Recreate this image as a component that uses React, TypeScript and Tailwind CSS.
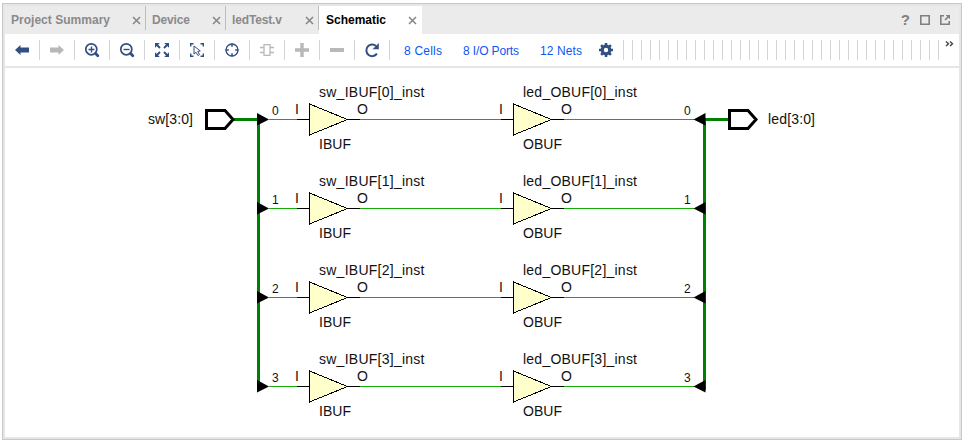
import React from "react";

const TABS = [
  { label: "Project Summary", width: "w-[141px]", pad: "pl-[6px]", text: 99, active: false },
  { label: "Device", width: "w-[80px]", pad: "pl-[6px]", text: 38, active: false },
  { label: "ledTest.v", width: "w-[93px]", pad: "pl-[6px]", text: 50, active: false },
  { label: "Schematic", width: "w-[103px]", pad: "pl-[7px]", text: 60, active: true },
];

function Fitted({ text, width, size, bold, fill }: { text: string; width: number; size: number; bold?: boolean; fill: string }) {
  return (
    <svg width={width} height="16" className="block shrink-0 overflow-visible">
      <text x="0" y="12" fontSize={size} fontWeight={bold ? 700 : 400} fill={fill} textLength={width}>
        {text}
      </text>
    </svg>
  );
}

function Icon({ children }: { children: React.ReactNode }) {
  return (
    <svg width="16" height="16" viewBox="0 0 16 16" fill="none" stroke="#314f82" strokeWidth="2" className="block shrink-0">
      {children}
    </svg>
  );
}

const ICONS: React.ReactNode[] = [
  <path d="M1 8 6.5 3v2.5H15v5H6.5V13z" fill="#314f82" stroke="none" />,
  <path d="M15 8 9.5 3v2.5H1v5h8.5V13z" fill="#b8b8b8" stroke="none" />,
  <>
    <circle cx="7.3" cy="7.3" r="5.5" strokeWidth="1.7" />
    <path d="m11.6 11.6 2.2 2.2" strokeWidth="2.8" strokeLinecap="round" />
    <path d="M4.5 7.5h6M7.5 4.5v6" strokeWidth="1.4" />
  </>,
  <>
    <circle cx="7.3" cy="7.3" r="5.5" strokeWidth="1.7" />
    <path d="m11.6 11.6 2.2 2.2" strokeWidth="2.8" strokeLinecap="round" />
    <path d="M4.5 7.5h6" strokeWidth="1.4" />
  </>,
  <>
    <path d="M1 1h4.8L1 5.8zM15 1h-4.8L15 5.8zM1 15h4.8L1 10.2zM15 15h-4.8l4.8-4.8z" fill="#314f82" stroke="none" />
    <path d="m2 2 4 4M14 2l-4 4M2 14l4-4M14 14l-4-4" strokeWidth="1.9" />
  </>,
  <>
    <path d="M1.7 4.5V1.7h2.8M11.5 1.7h2.8v2.8M1.7 11.5v2.8h2.8M11.5 14.3h2.8v-2.8" strokeWidth="1.4" />
    <path d="M5 4v8l2-1.7 2 3.2 1.5-1-1.8-3.1 2.6-.4z" strokeWidth="1" />
  </>,
  <>
    <circle cx="8" cy="8" r="6" strokeWidth="1.3" />
    <path d="M8 1.5v3.3M8 11.2v3.3M1.5 8h3.3M11.2 8h3.3" strokeWidth="1.5" />
  </>,
  <path d="M5 2.7h6v10.6H5zM1 5.5h4M1 10.5h4M11 5.5h4M11 10.5h4" stroke="#b8b8b8" strokeWidth="1.3" />,
  <path d="M8 1v14M1 8h14" stroke="#b8b8b8" strokeWidth="3.4" />,
  <path d="M1 8h14" stroke="#b8b8b8" strokeWidth="4" />,
  <>
    <path d="M12.9 11.7A5.8 5.8 0 1 1 12 4" strokeWidth="2" />
    <path d="M14.8 1v6.2H8.6z" fill="#314f82" stroke="none" />
  </>,
];

const HATCH = Array.from({ length: 36 }, (_, i) => i);
const ROWS = [0, 1, 2, 3];

function Buffer({ x, y, name, type }: { x: number; y: number; name: string; type: string }) {
  return (
    <g>
      <path d={`M${x - 12} ${y + 0.5}h12M${x + 38} ${y + 0.5}h13`} stroke="#000" shapeRendering="crispEdges" />
      <path d={`M${x + 0.5} ${y - 15}V${y + 16}L${x + 38.5} ${y + 0.5}z`} fill="#ffffcc" stroke="#000" shapeRendering="crispEdges" />
      <text x={x + 10} y={y - 22} textLength={name.startsWith("sw") ? 105.5 : 114}>{name}</text>
      <text x={x - 14} y={y - 5}>I</text>
      <text x={x + 48} y={y - 5}>O</text>
      <text x={x + 10} y={y + 30} textLength={type === "IBUF" ? 32 : 39}>{type}</text>
    </g>
  );
}

function Schematic() {
  return (
    <svg width="954" height="369" viewBox="5 68 954 369" className="block" fontSize="14" fill="#111">
      <path d="M234 119.5h23M704 119.5h25" stroke="#008000" strokeWidth="3" shapeRendering="crispEdges" />
      <path d="M258.5 119v271M704.5 119v271" stroke="#008000" strokeWidth="3" shapeRendering="crispEdges" />
      {ROWS.map((i) => {
        const y = 119 + i * 89;
        return (
          <g key={i}>
            <path d={`M269 ${y + 0.5}h29M360 ${y + 0.5}h141M564 ${y + 0.5}h130`} stroke="#16ac08" shapeRendering="crispEdges" />
            <path d={`M257 ${y - 6}v12.5l12-6zM705.5 ${y - 6}v12.5l-12-6z`} fill="#000" />
            <text x="272" y={y - 4} fontSize="12">{i}</text>
            <text x="684" y={y - 4} fontSize="12">{i}</text>
            <Buffer x={309} y={y} name={`sw_IBUF[${i}]_inst`} type="IBUF" />
            <Buffer x={513} y={y} name={`led_OBUF[${i}]_inst`} type="OBUF" />
          </g>
        );
      })}
      <path d="M206.5 110.5h18.5l8 9-8 9h-18.5zM729.5 110.5h18.5l8 9-8 9h-18.5z" fill="#fff" stroke="#000" strokeWidth="3" />
      <text x="148" y="124" textLength="45">sw[3:0]</text>
      <text x="768" y="124" textLength="47">led[3:0]</text>
    </svg>
  );
}

export default function App() {
  return (
    <div className="h-[444px] w-[965px] bg-white pl-[2px] pt-[3px] font-['Liberation_Sans',Arial,sans-serif]">
      <div className="h-[437px] w-[960px] border border-[#c8c8c8] bg-[#e6e6e6] p-[2px]">
        <div className="flex h-[28px] w-[954px] bg-[#ebebeb]">
          {TABS.map((t) => (
            <div
              key={t.label}
              className={`flex shrink-0 items-center justify-between pr-[5px] ${t.width} ${t.pad} ${t.active ? "bg-white" : "bg-[#ebebeb]"}`}
            >
              <Fitted text={t.label} width={t.text} size={12} bold fill={t.active ? "#000" : "#8a8a8a"} />
              <div className="flex h-full items-center gap-[4px]">
                <svg width="9" height="9" viewBox="0 0 9 9" className="block">
                  <path d="m1 1 7 7M8 1 1 8" stroke="#858585" strokeWidth="1.5" />
                </svg>
                {!t.active && <div className="-mr-[5px] h-[24px] w-px self-start bg-[#bdbdbd]" />}
              </div>
            </div>
          ))}
          <div className="ml-auto flex items-center gap-[10px] pr-[9px]">
            <span className="text-[15px] font-bold leading-[16px] text-[#808080]">?</span>
            <svg width="10" height="10" viewBox="0 0 10 10" className="block" fill="none" stroke="#808080" strokeWidth="1.6">
              <path d="M.8.8h8.4v8.4H.8z" />
            </svg>
            <svg width="10" height="10" viewBox="0 0 10 10" className="block" fill="none" stroke="#808080" strokeWidth="1.6">
              <path d="M4 .8H.8v8.4h8.4V6M5 5l3.5-3.5" />
              <path d="M5.7 0H10v4.3z" fill="#808080" stroke="none" />
            </svg>
          </div>
        </div>
        <div className="flex h-[32px] w-[954px] bg-white">
          {ICONS.map((icon, i) => (
            <div key={i} className="flex h-[32px] w-[35px] shrink-0 items-center justify-between pl-[9px]">
              <Icon>{icon}</Icon>
              <div className="h-[20px] w-px bg-[#d4d4d4]" />
            </div>
          ))}
          <div className="flex shrink-0 items-center pl-[14px]">
            <div className="flex pt-[2px]">
              <Fitted text="8 Cells" width={38} size={12} fill="#0b55f5" />
              <div className="w-[21px]" />
              <Fitted text="8 I/O Ports" width={56} size={12} fill="#0b55f5" />
              <div className="w-[21px]" />
              <Fitted text="12 Nets" width={42} size={12} fill="#0b55f5" />
            </div>
            <svg width="14" height="14" viewBox="0 0 14 14" className="ml-[17px] block">
              <circle cx="7" cy="7" r="3.8" fill="none" stroke="#314f82" strokeWidth="3.2" />
              <path d="M7 0v3M7 11v3M0 7h3M11 7h3M2.1 2.1l2 2M9.9 9.9l2 2M2.1 11.9l2-2M9.9 4.1l2-2" stroke="#314f82" strokeWidth="2.6" />
            </svg>
          </div>
          <div className="ml-[10px] flex shrink-0 items-center gap-[8px]">
            {HATCH.map((i) => (
              <div key={i} className="h-[20px] w-px bg-[#d4d4d4]" />
            ))}
          </div>
          <svg width="9" height="6" viewBox="0 0 9 6" className="ml-[6px] mt-[7px] block shrink-0">
            <path d="m1 .5 2.5 2.3L1 5.1M5 .5l2.5 2.3L5 5.1" fill="none" stroke="#444" strokeWidth="1.4" />
          </svg>
        </div>
        <div className="mt-[2px] h-[369px] w-[954px] bg-white">
          <Schematic />
        </div>
      </div>
    </div>
  );
}
